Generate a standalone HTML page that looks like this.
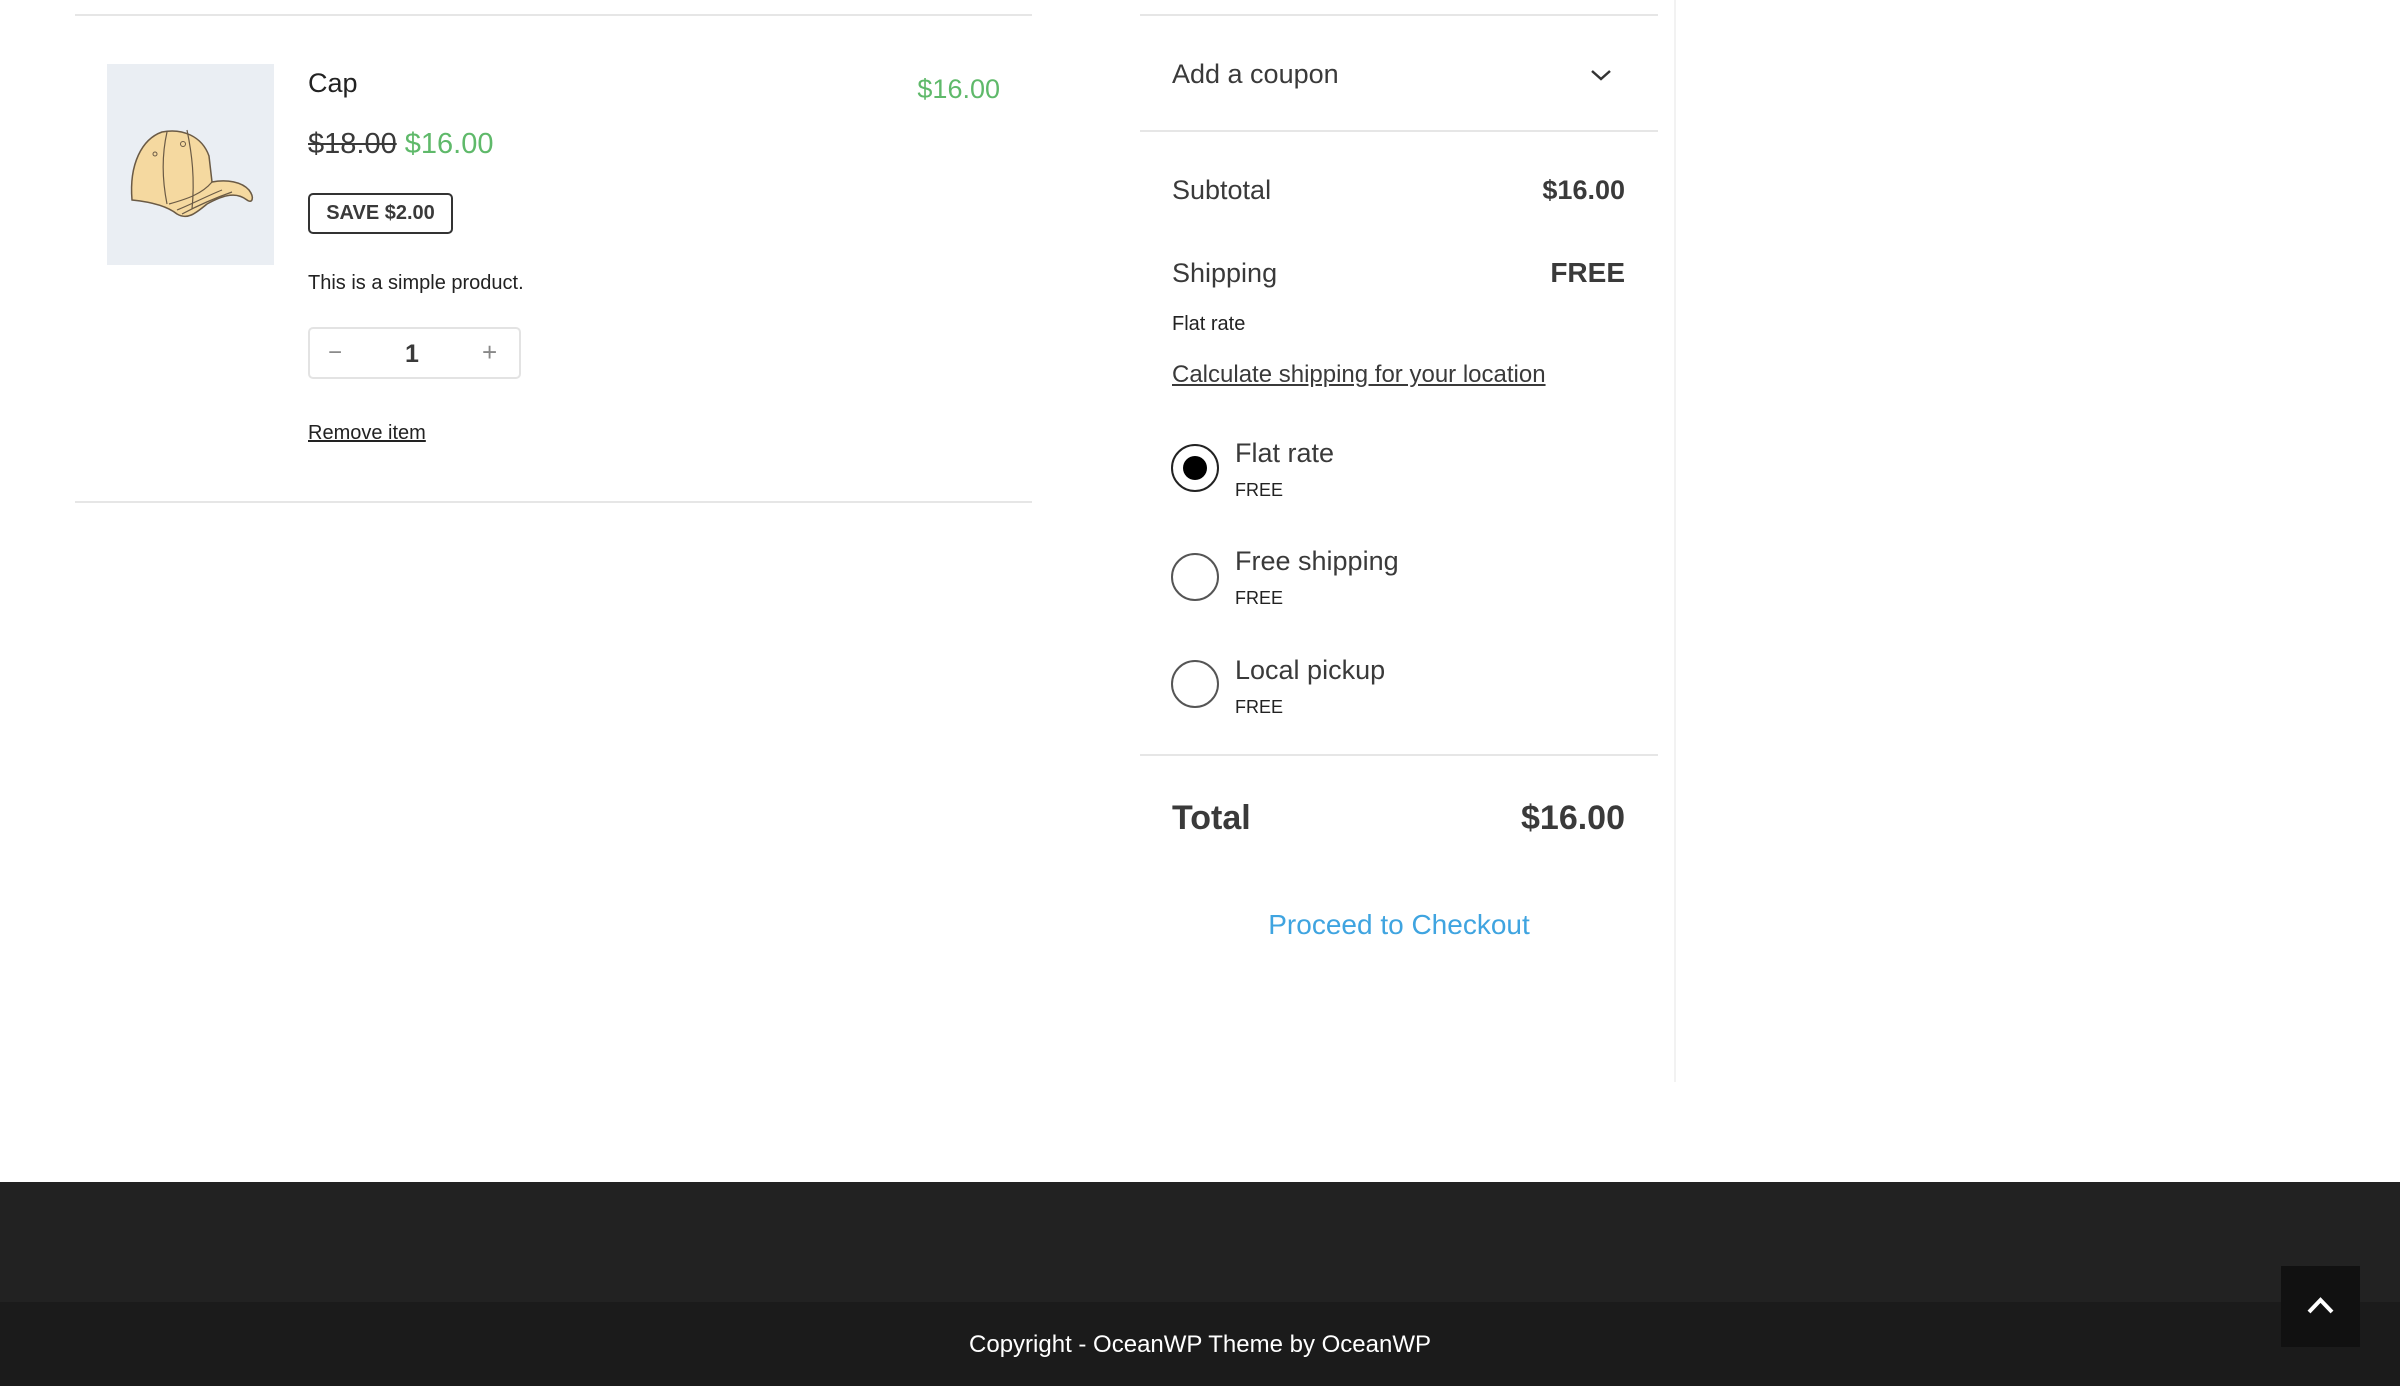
<!DOCTYPE html>
<html><head><meta charset="utf-8"><style>
*{margin:0;padding:0;box-sizing:border-box}
body{width:2400px;height:1386px;position:relative;background:#fff;font-family:"Liberation Sans",Arial,sans-serif;color:#3a3a3a;overflow:hidden}
.a{position:absolute;white-space:nowrap}
.hl{position:absolute;height:2px;background:#e6e6e6}
.g{color:#5fb96a}
.r{position:absolute;width:48px;height:48px;border:2px solid #555;border-radius:50%}
</style></head><body>
<div class="hl" style="left:75px;top:14px;width:957px"></div>
<div class="hl" style="left:75px;top:501px;width:957px"></div>
<div style="position:absolute;left:107px;top:64px;width:167px;height:201px;background:#eaeef3">
<svg width="167" height="201" viewBox="0 0 167 201">
<path d="M25 136 C22 100 35 75 55 68 C75 64 95 72 102 92 L105 118 C120 115 135 118 142 126 C148 134 145 140 140 136 C130 128 118 130 100 140 C88 150 80 156 70 150 C60 142 45 138 25 136 Z" fill="#f5d9a0" stroke="#6a5a45" stroke-width="1.5"/>
<path d="M60 68 C55 90 55 115 60 140 M80 66 C85 90 88 115 85 145 M62 140 C80 135 95 130 105 118 M70 146 C85 140 100 132 115 126 M75 150 C90 142 105 135 125 128" fill="none" stroke="#6a5a45" stroke-width="1.2"/>
<circle cx="48" cy="90" r="2" fill="none" stroke="#6a5a45"/><circle cx="76" cy="80" r="2.5" fill="none" stroke="#6a5a45"/>
</svg></div>
<div class="a" style="left:308px;top:68px;font-size:27px;color:#222">Cap</div>
<div class="a g" style="right:1400px;top:74px;font-size:27px">$16.00</div>
<div class="a" style="left:308px;top:128px;font-size:29px"><s>$18.00</s> <span class="g">$16.00</span></div>
<div class="a" style="left:308px;top:193px;width:145px;height:41px;border:2px solid #333;border-radius:5px;font-size:20px;font-weight:bold;line-height:37px;text-align:center">SAVE $2.00</div>
<div class="a" style="left:308px;top:272px;font-size:20px;color:#222">This is a simple product.</div>
<div class="a" style="left:308px;top:327px;width:213px;height:52px;border:2px solid #e3e3e3;border-radius:5px">
<span class="a" style="left:18px;top:10px;font-size:24px;color:#888">−</span>
<span class="a" style="left:95px;top:11px;font-size:25px;font-weight:bold">1</span>
<span class="a" style="left:172px;top:8px;font-size:26px;color:#888">+</span></div>
<div class="a" style="left:308px;top:422px;font-size:20px;color:#222;text-decoration:underline">Remove item</div>

<div style="position:absolute;left:1674px;top:0;width:2px;height:1082px;background:#f2f2f2"></div>
<div class="hl" style="left:1140px;top:14px;width:518px"></div>
<div class="hl" style="left:1140px;top:130px;width:518px"></div>
<div class="hl" style="left:1140px;top:754px;width:518px"></div>
<div class="a" style="left:1172px;top:59px;font-size:27px">Add a coupon</div>
<svg class="a" style="left:1589px;top:67px" width="24" height="16" viewBox="0 0 24 16"><path d="M3 4 L12 12 L21 4" fill="none" stroke="#333" stroke-width="2.5"/></svg>
<div class="a" style="left:1172px;top:175px;font-size:27px">Subtotal</div>
<div class="a" style="right:775px;top:175px;font-size:27px;font-weight:bold">$16.00</div>
<div class="a" style="left:1172px;top:258px;font-size:27px">Shipping</div>
<div class="a" style="right:775px;top:257px;font-size:28px;font-weight:bold">FREE</div>
<div class="a" style="left:1172px;top:313px;font-size:20px;color:#222">Flat rate</div>
<div class="a" style="left:1172px;top:361px;font-size:24px;text-decoration:underline">Calculate shipping for your location</div>
<div class="r" style="left:1171px;top:444px;border-color:#222"><div style="position:absolute;left:10px;top:10px;width:24px;height:24px;border-radius:50%;background:#000"></div></div>
<div class="r" style="left:1171px;top:553px"></div>
<div class="r" style="left:1171px;top:660px"></div>
<div class="a" style="left:1235px;top:438px;font-size:27px">Flat rate</div>
<div class="a" style="left:1235px;top:480px;font-size:18px;color:#222">FREE</div>
<div class="a" style="left:1235px;top:546px;font-size:27px">Free shipping</div>
<div class="a" style="left:1235px;top:588px;font-size:18px;color:#222">FREE</div>
<div class="a" style="left:1235px;top:655px;font-size:27px">Local pickup</div>
<div class="a" style="left:1235px;top:697px;font-size:18px;color:#222">FREE</div>
<div class="a" style="left:1172px;top:799px;font-size:34px;font-weight:bold">Total</div>
<div class="a" style="right:775px;top:799px;font-size:34px;font-weight:bold">$16.00</div>
<div class="a" style="left:1140px;width:518px;text-align:center;top:909px;font-size:28px;color:#3fa4e0">Proceed to Checkout</div>

<div style="position:absolute;left:0;top:1182px;width:2400px;height:120px;background:#222"></div>
<div style="position:absolute;left:0;top:1302px;width:2400px;height:84px;background:#1b1b1b"></div>
<div class="a" style="left:0;width:2400px;text-align:center;top:1331px;font-size:24px;color:#fff">Copyright - OceanWP Theme by OceanWP</div>
<div class="a" style="left:2281px;top:1266px;width:79px;height:81px;background:#111">
<svg width="79" height="81" viewBox="0 0 79 81"><path d="M28 46 L39.5 34 L51 46" fill="none" stroke="#fff" stroke-width="4"/></svg></div>
</body></html>
